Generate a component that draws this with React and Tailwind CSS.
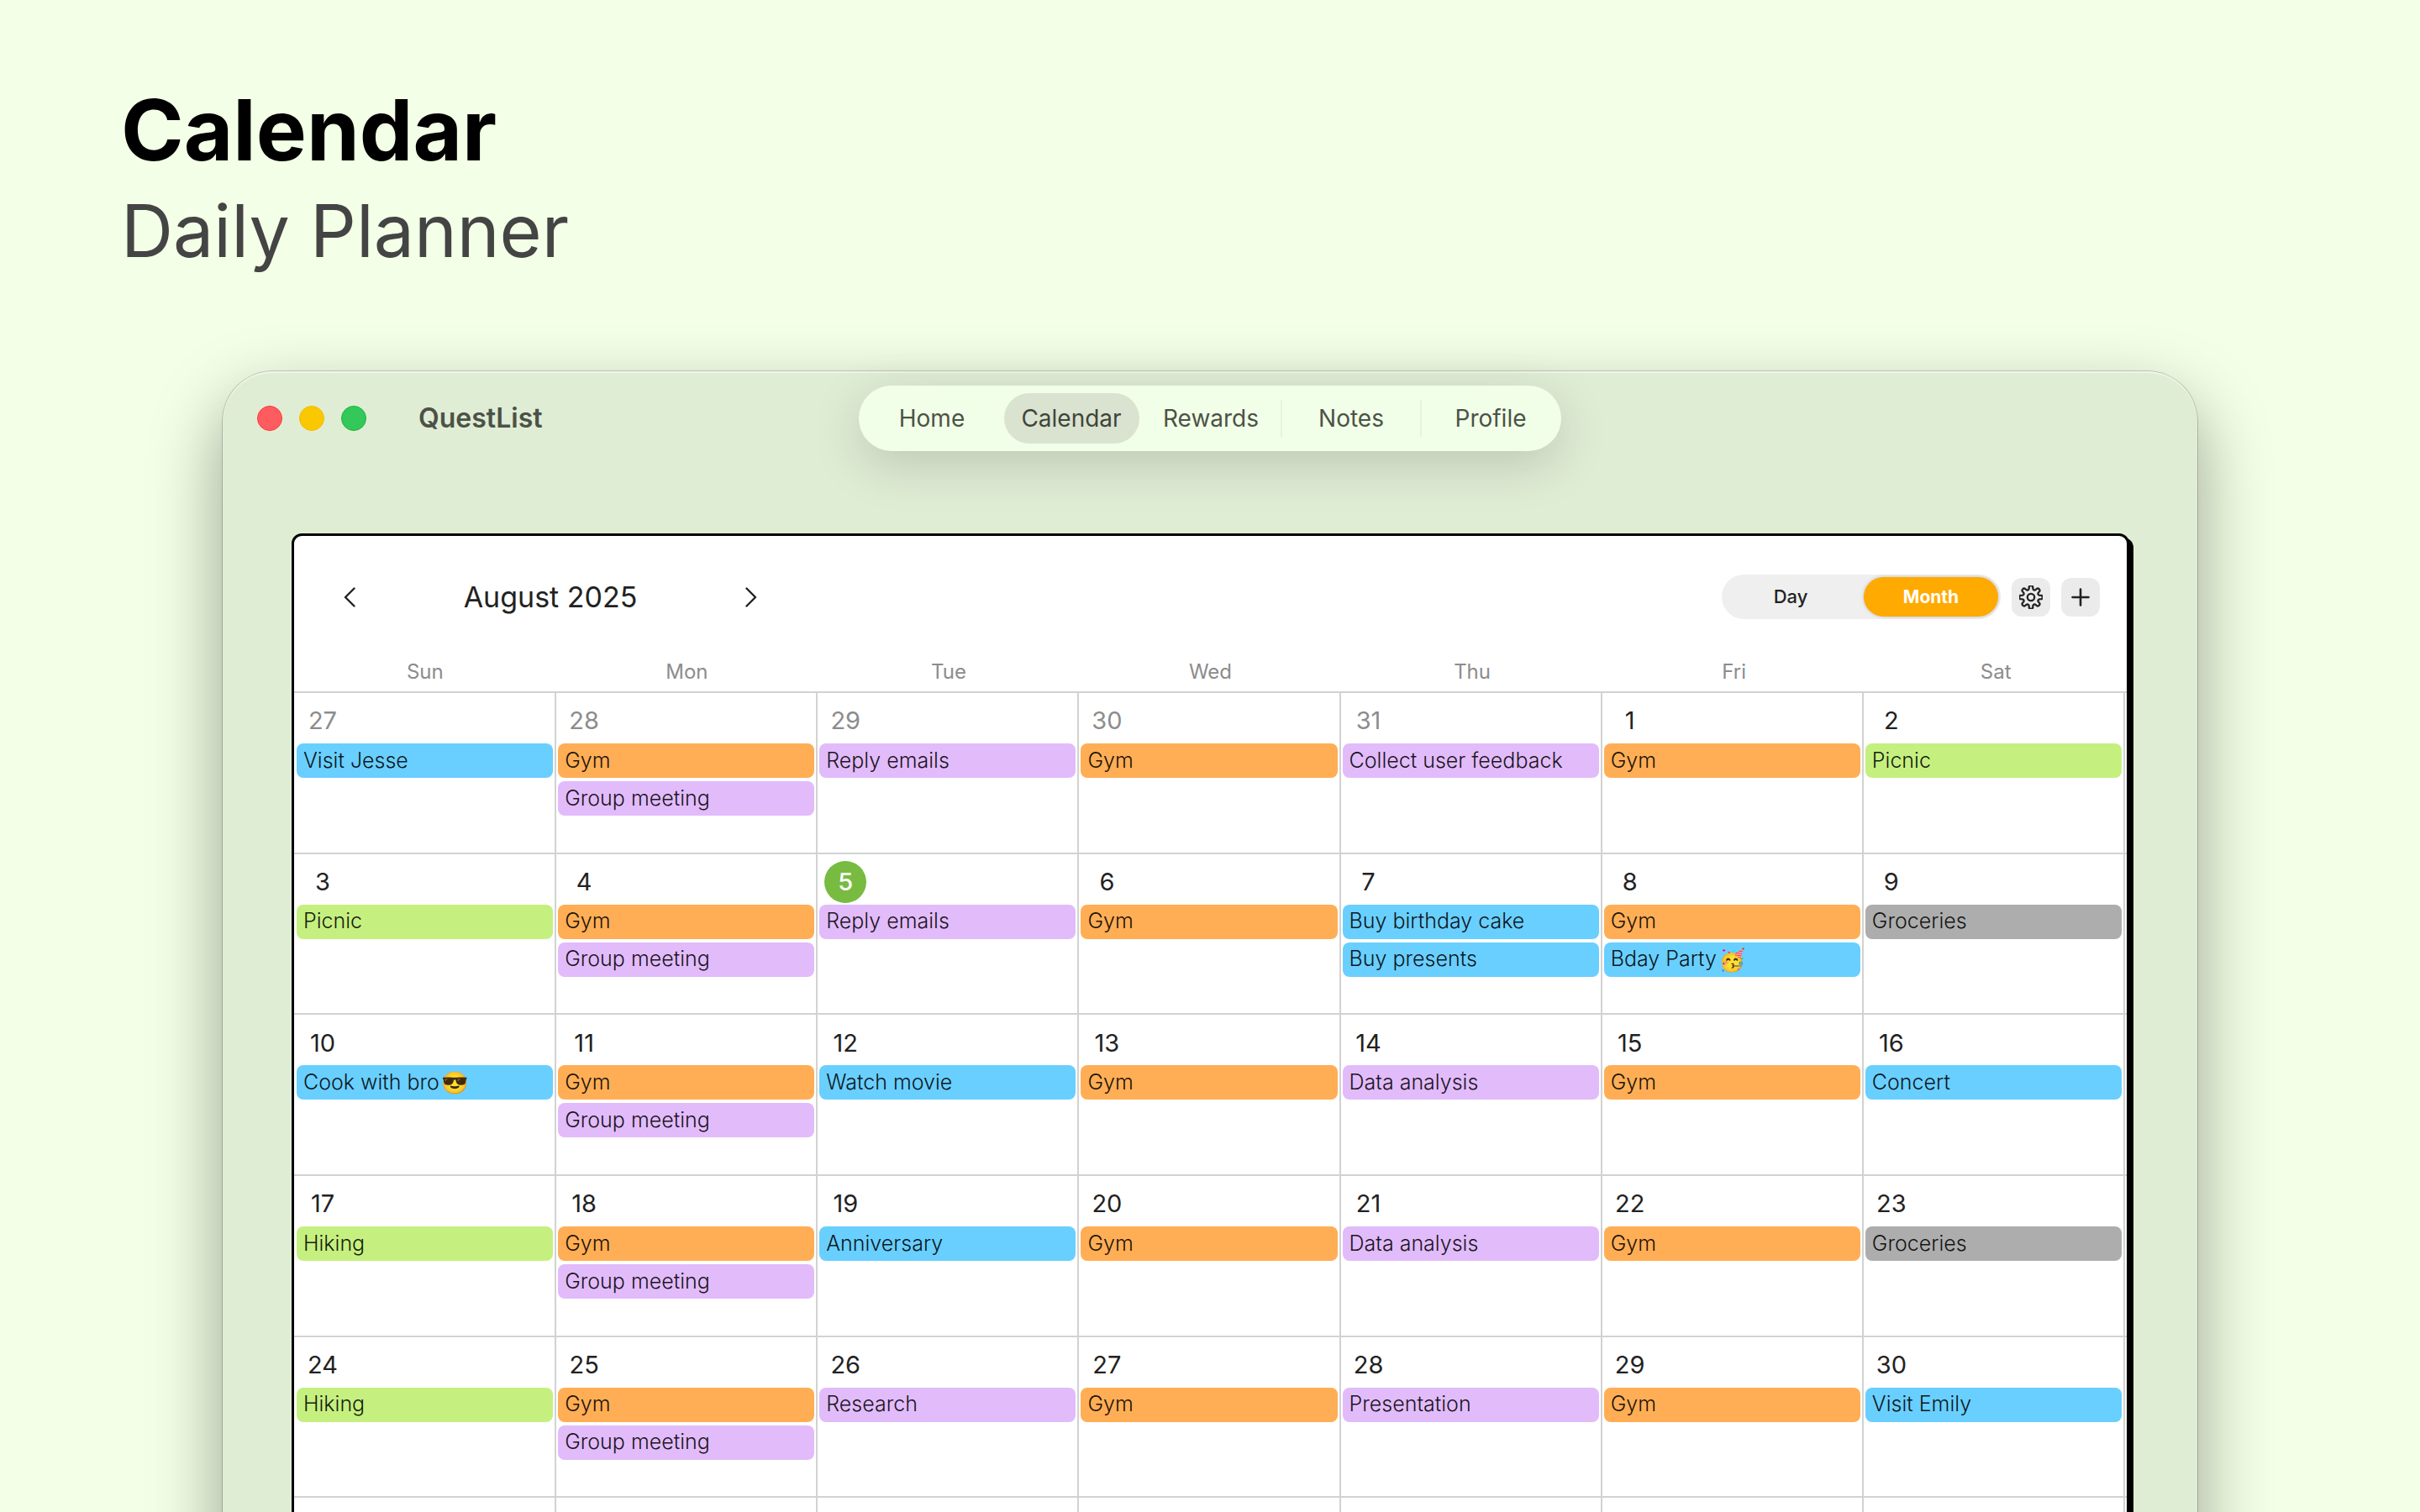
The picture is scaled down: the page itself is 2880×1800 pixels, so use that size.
import React from "react";

const COLORS = {
  blue: "bg-[#69cfff]",
  orange: "bg-[#ffae55]",
  purple: "bg-[#e2bbfb]",
  green: "bg-[#c5f07f]",
  gray: "bg-[#adadad]",
};

const gym = ["Gym", "orange"];
const group = ["Group meeting", "purple"];
const reply = ["Reply emails", "purple"];

const WEEKS = [
  [
    { day: 27, muted: true, events: [["Visit Jesse", "blue"]] },
    { day: 28, muted: true, events: [gym, group] },
    { day: 29, muted: true, events: [reply] },
    { day: 30, muted: true, events: [gym] },
    { day: 31, muted: true, events: [["Collect user feedback", "purple"]] },
    { day: 1, events: [gym] },
    { day: 2, events: [["Picnic", "green"]] },
  ],
  [
    { day: 3, events: [["Picnic", "green"]] },
    { day: 4, events: [gym, group] },
    { day: 5, today: true, events: [reply] },
    { day: 6, events: [gym] },
    { day: 7, events: [["Buy birthday cake", "blue"], ["Buy presents", "blue"]] },
    { day: 8, events: [gym, ["Bday Party", "blue", "🥳"]] },
    { day: 9, events: [["Groceries", "gray"]] },
  ],
  [
    { day: 10, events: [["Cook with bro", "blue", "😎"]] },
    { day: 11, events: [gym, group] },
    { day: 12, events: [["Watch movie", "blue"]] },
    { day: 13, events: [gym] },
    { day: 14, events: [["Data analysis", "purple"]] },
    { day: 15, events: [gym] },
    { day: 16, events: [["Concert", "blue"]] },
  ],
  [
    { day: 17, events: [["Hiking", "green"]] },
    { day: 18, events: [gym, group] },
    { day: 19, events: [["Anniversary", "blue"]] },
    { day: 20, events: [gym] },
    { day: 21, events: [["Data analysis", "purple"]] },
    { day: 22, events: [gym] },
    { day: 23, events: [["Groceries", "gray"]] },
  ],
  [
    { day: 24, events: [["Hiking", "green"]] },
    { day: 25, events: [gym, group] },
    { day: 26, events: [["Research", "purple"]] },
    { day: 27, events: [gym] },
    { day: 28, events: [["Presentation", "purple"]] },
    { day: 29, events: [gym] },
    { day: 30, events: [["Visit Emily", "blue"]] },
  ],
];

const NAV = [
  { label: "Home" },
  { label: "Calendar", active: true },
  { label: "Rewards" },
  { label: "Notes", divider: true },
  { label: "Profile", divider: true },
];

function Chevron({ direction }) {
  return (
    <svg viewBox="0 0 14 24" className="h-6 w-3.5" fill="none" stroke="#222" strokeWidth="2.4" strokeLinecap="round" strokeLinejoin="round" aria-hidden="true">
      <path d={direction === "left" ? "M12.5 1.5 2 12l10.5 10.5" : "M1.5 1.5 12 12 1.5 22.5"} />
    </svg>
  );
}

function gearPath() {
  const teeth = 8;
  const pts = [];
  for (let i = 0; i < teeth; i++) {
    const c = (i * 2 * Math.PI) / teeth - Math.PI / 2;
    [[-0.25, 10], [-0.17, 12.8], [0.17, 12.8], [0.25, 10]].forEach(([a, r]) => {
      pts.push([14 + r * Math.cos(c + a), 14 + r * Math.sin(c + a)]);
    });
  }
  let d = "";
  pts.forEach(([x, y], i) => {
    const p = `${x.toFixed(2)} ${y.toFixed(2)}`;
    if (i === 0) d += `M${p}`;
    else if (i % 4 === 0) d += `A2.1 2.1 0 0 0 ${p}`;
    else if (i % 4 === 2) d += `A2.6 2.6 0 0 1 ${p}`;
    else d += `L${p}`;
  });
  return `${d}A2.1 2.1 0 0 0 ${pts[0][0].toFixed(2)} ${pts[0][1].toFixed(2)}Z`;
}

function Gear() {
  return (
    <svg viewBox="0 0 28 28" className="size-7" fill="none" stroke="#222" strokeWidth="2.3" strokeLinejoin="round" aria-hidden="true">
      <path d={gearPath()} />
      <circle cx="14" cy="14" r="4.2" />
    </svg>
  );
}

function Plus() {
  return (
    <svg viewBox="0 0 22 22" className="size-[22px]" fill="none" stroke="#222" strokeWidth="2.6" strokeLinecap="round" aria-hidden="true">
      <path d="M11 1.5v19M1.5 11h19" />
    </svg>
  );
}

function TitleBar() {
  return (
    <header className="grid h-[112px] grid-cols-[1fr_836px_1fr] items-center">
      <div className="flex items-center pl-[41px]">
        <div className="flex gap-5">
          <button aria-label="Close" className="size-[30px] rounded-full border border-[#fb3a41] bg-[#ff5c5f]" />
          <button aria-label="Minimize" className="size-[30px] rounded-full border border-[#f3bd00] bg-[#fac800]" />
          <button aria-label="Zoom" className="size-[30px] rounded-full border border-[#14b83b] bg-[#34c759]" />
        </div>
        <span className="ml-[62px] text-[32px] leading-10 font-semibold text-[#4c5247]">QuestList</span>
      </div>
      <nav className="grid h-[78px] grid-cols-5 items-center rounded-full bg-[#f2ffe8] pr-0.5 pl-1 shadow-[0_16px_60px_rgba(0,0,0,0.16)]">
        {NAV.map((item) => (
          <div key={item.label} className={item.divider ? "flex h-11 items-center justify-center border-l-2 border-[#e6f2dc]" : "flex h-11 items-center justify-center"}>
            <a
              href="#"
              aria-current={item.active ? "page" : undefined}
              className={
                item.active
                  ? "flex h-15 w-[161px] shrink-0 items-center justify-center rounded-full bg-[#dae3d0] text-[28px] text-[#3f453b]"
                  : "text-[28px] text-[#4b5347]"
              }
            >
              {item.label}
            </a>
          </div>
        ))}
      </nav>
    </header>
  );
}

function Toolbar() {
  return (
    <div className="flex h-[137px] items-center justify-between pt-2 pr-8 pl-[51px]">
      <div className="flex w-[508px] items-center justify-between">
        <button aria-label="Previous month" className="px-2 py-2"><Chevron direction="left" /></button>
        <h2 className="text-[34px] leading-11 text-[#222]">August 2025</h2>
        <button aria-label="Next month" className="px-2 py-2"><Chevron direction="right" /></button>
      </div>
      <div className="flex items-center gap-[13px]">
        <div className="grid h-[53px] w-[332px] grid-cols-[1fr_160px] items-center rounded-full bg-[#efefef] p-[3px]">
          <button className="h-full rounded-full pr-2 text-[22px] font-medium text-[#222]">Day</button>
          <button aria-pressed="true" className="h-full rounded-full bg-[#ffaa00] text-[21px] font-bold text-white shadow-[0_0_4px_rgba(0,0,0,0.2)]">Month</button>
        </div>
        <button aria-label="Settings" className="flex size-[46px] items-center justify-center rounded-xl bg-[#ebebeb]"><Gear /></button>
        <button aria-label="Add event" className="flex size-[46px] items-center justify-center rounded-xl bg-[#ebebeb]"><Plus /></button>
      </div>
    </div>
  );
}

function DayCell({ day, muted, today, events }) {
  return (
    <td className="min-w-0 border-r-2 border-[#d2d2d2] px-0.5 pt-2">
      <span
        className={
          today
            ? "ml-1.5 flex size-[50px] items-center justify-center rounded-full bg-[#77bb41] text-[29px] font-medium text-white"
            : muted
              ? "ml-1.5 flex size-[50px] items-center justify-center text-[29px] text-[#8c8c8c]"
              : "ml-1.5 flex size-[50px] items-center justify-center text-[29px] text-[#222]"
        }
      >
        {day}
      </span>
      <ul className="mt-0.5 flex flex-col gap-1">
        {events.map(([title, color, emoji]) => (
          <li key={title}>
            <button className={`${COLORS[color]} flex h-[41px] w-full items-center rounded-lg pl-2 text-left text-[25px] font-light whitespace-nowrap text-black/90`}>
              {title}
              {emoji && <span className="ml-0.5 text-[26px] font-normal text-black">{emoji}</span>}
            </button>
          </li>
        ))}
      </ul>
    </td>
  );
}

function MonthTable() {
  return (
    <table className="block w-full">
      <thead className="block">
        <tr className="grid h-12 grid-cols-7 items-center">
          {["Sun", "Mon", "Tue", "Wed", "Thu", "Fri", "Sat"].map((d) => (
            <th key={d} scope="col" className="pt-0.5 text-[24px] font-normal text-[#8c8c8c]">{d}</th>
          ))}
        </tr>
      </thead>
      <tbody className="grid h-[1150px] grid-rows-6">
        {WEEKS.map((week, i) => (
          <tr key={i} className="grid grid-cols-7 border-t-2 border-[#d2d2d2] pr-0.5 pl-px">
            {week.map((cell) => <DayCell key={cell.day} {...cell} />)}
          </tr>
        ))}
        <tr className="grid grid-cols-7 border-t-2 border-[#d2d2d2] pr-0.5 pl-px">
          {[0, 1, 2, 3, 4, 5, 6].map((i) => <td key={i} className="border-r-2 border-[#d2d2d2]" />)}
        </tr>
      </tbody>
    </table>
  );
}

export default function App() {
  return (
    <div className="h-screen overflow-hidden bg-[#f3ffe6] font-['Inter','Noto_Color_Emoji',sans-serif]">
      <div className="pt-[94px] pl-36">
        <h1 className="text-[101px] leading-[120px] font-bold text-black">Calendar</h1>
        <p className="text-[86px] leading-[122px] text-[#444444]">Daily Planner</p>
      </div>
      <div className="mx-[265px] mt-[106px] rounded-t-[60px] bg-[#e0edd5] shadow-[0_36px_85px_rgba(0,0,0,0.38),0_0_0_1px_rgba(0,0,0,0.18),inset_0_2px_1px_rgba(255,255,255,0.5)]">
        <TitleBar />
        <main className="pt-[81px] pr-[81px] pl-[82px]">
          <section className="rounded-xl border-3 border-black bg-white shadow-[5px_5px_0_#000]">
            <Toolbar />
            <MonthTable />
          </section>
        </main>
      </div>
    </div>
  );
}
